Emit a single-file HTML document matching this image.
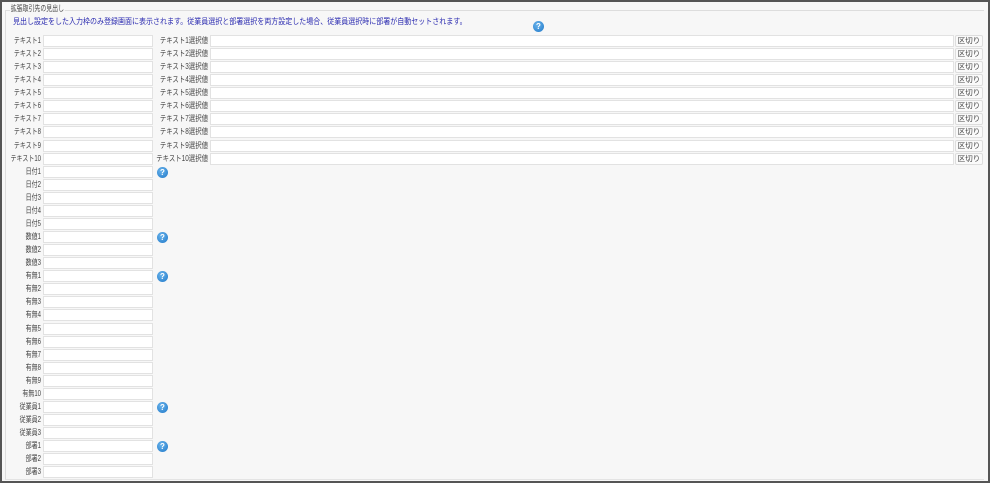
<!DOCTYPE html>
<html><head><meta charset="utf-8"><style>
*{margin:0;padding:0;box-sizing:border-box}
body{width:990px;height:483px;background:#f7f7f7;font-family:"Liberation Sans","Noto Sans CJK JP",sans-serif;font-size:8px;color:#333;position:relative;overflow:hidden}
.frame{position:absolute;left:0;top:0;width:990px;height:483px;border:2px solid #555}
.fs{position:absolute;left:5px;top:10px;width:979px;height:470px;border:1px solid #ddd;border-right:none;border-bottom:1px solid #e4e4e4}
.lg{position:absolute;left:10px;top:4px;background:#f7f7f7;padding:0 1px;color:#444;font-size:8px;line-height:10px;transform:scaleX(0.74);transform-origin:left}
.desc{position:absolute;left:13px;top:17px;color:#2b2bb0;font-size:8px;line-height:10px;white-space:nowrap;transform:scaleX(0.875);transform-origin:left}
.l{position:absolute;left:0;width:41px;text-align:right;line-height:12px;color:#444;white-space:nowrap;transform:scaleX(0.75);transform-origin:right}
.i{position:absolute;left:43px;width:110px;height:12px;background:#fff;border:1px solid #e2e2e2}
.l2{position:absolute;left:0;width:208px;text-align:right;line-height:12px;color:#444;white-space:nowrap;transform:scaleX(0.8);transform-origin:right}
.i2{position:absolute;left:210px;width:744px;height:12px;background:#fff;border:1px solid #e2e2e2}
.b{position:absolute;left:955px;width:28px;height:12px;background:#fafafa;border:1px solid #ddd;border-radius:2px;font-size:7.5px;line-height:10px;text-align:center;color:#444}
.h{position:absolute;width:11px;height:11px;border-radius:50%;background:radial-gradient(circle at 40% 35%,#6ab4ec,#1f78c8);color:#fff;font-weight:bold;font-size:8px;line-height:11px;text-align:center}
</style></head><body>
<div class="frame"></div>
<div class="fs"></div>
<div class="lg">拡張取引先の見出し</div>
<div class="desc">見出し設定をした入力枠のみ登録画面に表示されます。従業員選択と部署選択を両方設定した場合、従業員選択時に部署が自動セットされます。</div>
<div class="h" style="left:533px;top:21px">?</div>
<div id="rows"></div>
<script>
var L=["テキスト1","テキスト2","テキスト3","テキスト4","テキスト5","テキスト6","テキスト7","テキスト8","テキスト9","テキスト10","日付1","日付2","日付3","日付4","日付5","数値1","数値2","数値3","有無1","有無2","有無3","有無4","有無5","有無6","有無7","有無8","有無9","有無10","従業員1","従業員2","従業員3","部署1","部署2","部署3"];
var H=[10,15,18,28,31],s="";
for(var i=0;i<L.length;i++){var t=Math.round(35+13.07*i);
s+='<div class="l" style="top:'+t+'px">'+L[i]+'</div><div class="i" style="top:'+t+'px"></div>';
if(i<10){s+='<div class="l2" style="top:'+t+'px">テキスト'+(i+1)+'選択値</div><div class="i2" style="top:'+t+'px"></div><div class="b" style="top:'+t+'px">区切り</div>';}
if(H.indexOf(i)>=0)s+='<div class="h" style="left:157px;top:'+(t+1)+'px">?</div>';}
document.getElementById("rows").innerHTML=s;
</script>
</body></html>
